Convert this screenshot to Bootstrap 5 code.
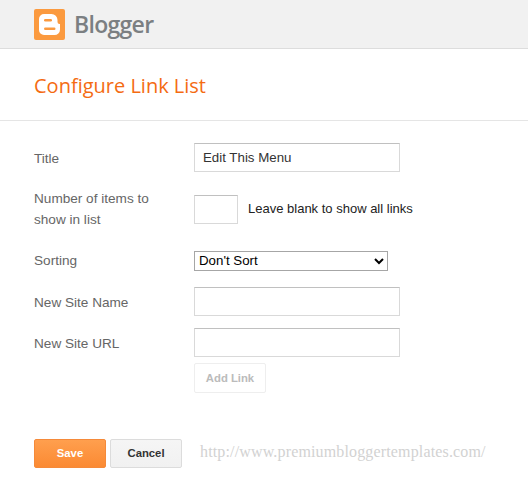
<!DOCTYPE html>
<html lang="en">
<head>
    <meta charset="UTF-8">
    <meta name="viewport" content="width=device-width, initial-scale=1">
    <title>Configure Link List</title>
    <link href="https://cdn.jsdelivr.net/npm/bootstrap@5.3.3/dist/css/bootstrap.min.css" rel="stylesheet">
    <style>
        body { background: #fff; font-family: "Liberation Sans", Arial, sans-serif; font-size: 13.6px; color: #666; overflow: hidden; }
        .top-bar { height: 49px; background: #f1f1f1; border-bottom: 1px solid #ddd; padding: 9px 0 0 34px; gap: 9px; }
        .brand-name { font-family: "Open Sans", sans-serif; font-size: 23px; font-weight: 600; line-height: 31px; color: #7b7f82; letter-spacing: -.7px; }
        .page-head { height: 72px; border-bottom: 1px solid #e5e5e5; padding: 22px 0 0 34px; }
        .page-title { font-family: "Open Sans", sans-serif; font-size: 20px; font-weight: 400; line-height: 30px; color: #f46b12; margin: 0; }
        .cfg-form { padding: 22px 0 0 34px; }
        .cfg-row { margin-bottom: 12px; }
        .cfg-row-title { margin-bottom: 16px; }
        .cfg-row-num { margin-bottom: 20px; }
        .cfg-row-sort { margin-bottom: 16px; }
        .cfg-label { width: 160px; padding-right: 30px; line-height: 21px; flex: none; }
        .cfg-label-one { padding-top: 2px; }
        .cfg-input { width: 206px; height: 29px; border: 1px solid #d9d9d9; border-top-color: #c0c0c0; padding: 1px 8px; font-family: "Liberation Sans", sans-serif; font-size: 13.3px; color: #333; background: #fff; outline: 0; }
        .cfg-short { width: 44px; }
        .cfg-hint { font-size: 13px; color: #222; margin-left: 10px; }
        .cfg-select { width: 194px; height: 20px; border: 1px solid #a6a6a6; padding: 0; font-family: "Liberation Sans", sans-serif; font-size: 13.3px; color: #000; background: #fff; }
        .btn-blog { height: 29px; width: 72px; padding: 0; font-family: "Liberation Sans", sans-serif; font-size: 11.3px; font-weight: 700; border-radius: 2px; line-height: 27px; }
        .btn-blog-add { height: 30px; margin-left: 160px; margin-top: -6px; background: #fff; border: 1px solid #eee; color: #bbb; }
        .btn-blog-save { background: linear-gradient(#ff9f4e, #fb8a33); border: 1px solid #f58a3a; color: #fff; }
        .btn-blog-cancel { background: linear-gradient(#f5f5f5, #f1f1f1); border: 1px solid #dcdcdc; color: #333; }
        .foot-row { padding: 46px 0 0 0; gap: 4px; }
        .water-mark { font-family: "Liberation Serif", serif; font-size: 16px; font-weight: 400; color: #d2d2d2; margin-left: 14px; letter-spacing: .15px; padding-bottom: 4px; }
    </style>
</head>
<body>
<div class="top-bar d-flex align-items-start">
    <svg width="31" height="31" viewBox="0 0 31 31">
        <rect width="31" height="31" rx="2" fill="#fb9a3f"/>
        <path d="M10 5h7.500a6 6 0 0 1 6 6v2a2 2 0 0 0 2 2h.500v5.500a5.500 5.500 0 0 1-5.500 5.500H10a5 5 0 0 1-5-5V10a5 5 0 0 1 5-5z" fill="#fff"/>
        <rect x="10" y="10" width="8" height="2.500" rx="1.200" fill="#fb9a3f"/>
        <rect x="10" y="18.500" width="11.500" height="2.500" rx="1.200" fill="#fb9a3f"/>
    </svg>
    <span class="brand-name">Blogger</span>
</div>
<div class="page-head">
    <h1 class="page-title">Configure Link List</h1>
</div>
<form class="cfg-form">
    <div class="cfg-row cfg-row-title d-flex align-items-center">
        <label class="cfg-label cfg-label-one">Title</label>
        <input class="cfg-input" type="text" value="Edit This Menu">
    </div>
    <div class="cfg-row cfg-row-num d-flex align-items-center">
        <label class="cfg-label">Number of items to show in list</label>
        <input class="cfg-input cfg-short" type="text">
        <span class="cfg-hint">Leave blank to show all links</span>
    </div>
    <div class="cfg-row cfg-row-sort d-flex align-items-center">
        <label class="cfg-label">Sorting</label>
        <select class="cfg-select"><option>Don't Sort</option></select>
    </div>
    <div class="cfg-row d-flex align-items-center">
        <label class="cfg-label cfg-label-one">New Site Name</label>
        <input class="cfg-input" type="text">
    </div>
    <div class="cfg-row d-flex align-items-center">
        <label class="cfg-label cfg-label-one">New Site URL</label>
        <input class="cfg-input" type="text">
    </div>
    <button type="button" class="btn btn-blog btn-blog-add">Add Link</button>
    <div class="foot-row d-flex align-items-center">
        <button type="button" class="btn btn-blog btn-blog-save">Save</button>
        <button type="button" class="btn btn-blog btn-blog-cancel">Cancel</button>
        <span class="water-mark">http://www.premiumbloggertemplates.com/</span>
    </div>
</form>
<script src="https://cdn.jsdelivr.net/npm/bootstrap@5.3.3/dist/js/bootstrap.bundle.min.js"></script>
</body>
</html>
